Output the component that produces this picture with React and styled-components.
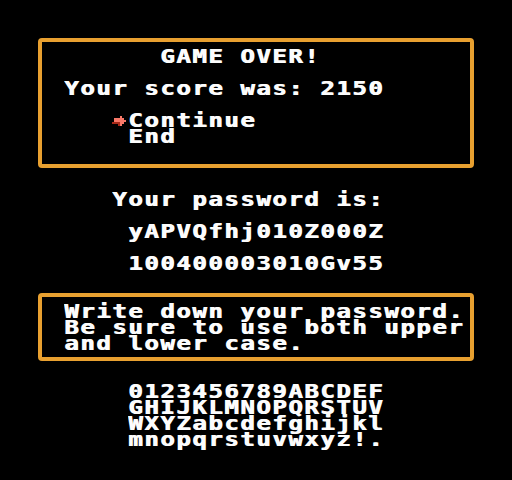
import React from "react";
import styled, { createGlobalStyle } from "styled-components";

const CELL = 16;

const GlobalStyle = createGlobalStyle`
  html, body {
    margin: 0;
    padding: 0;
    background: #000;
  }
`;

const Screen = styled.div`
  width: 512px;
  height: 480px;
  background: #000;
  color: #fcfcfc;
  font-family: "DejaVu Sans Mono", "Liberation Mono", monospace;
  font-weight: bold;
  font-size: 20px;
  line-height: ${CELL}px;
  padding-top: 38px;
  box-sizing: border-box;
  display: flex;
  flex-direction: column;
`;

const Frame = styled.div`
  margin-left: 38px;
  margin-top: ${(p) => p.top || 0}px;
  width: 436px;
  box-sizing: border-box;
  border: 4px solid #e8a030;
  border-radius: 4px;
  padding: ${(p) => p.padTop}px 0 ${(p) => p.padBottom}px 22px;
  display: flex;
  flex-direction: column;
`;

const Block = styled.div`
  margin-top: ${(p) => p.top}px;
  padding-left: ${(p) => p.left}px;
  display: flex;
  flex-direction: column;
`;

const Line = styled.div`
  height: ${CELL}px;
  margin-top: ${(p) => (p.gap ? p.gap * CELL : 0)}px;
  padding-left: ${(p) => (p.indent || 0) * CELL}px;
  display: flex;
  align-items: flex-start;
`;

// chunky, wide glyphs on a 16px grid: 12px advance + spacing, stretched 1.2x
const Text = styled.span`
  display: inline-block;
  white-space: pre;
  letter-spacing: 1.29px;
  transform: scaleX(1.2);
  transform-origin: 0 0;
  text-shadow: 0.8px 0 0 #fcfcfc;
`;

const Cursor = styled.svg`
  width: ${CELL}px;
  height: ${CELL}px;
  flex: none;
  shape-rendering: crispEdges;
`;

function Arrow() {
  return (
    <Cursor viewBox="0 0 8 8">
      <g fill="#a82818">
        <rect x="0" y="5" width="4" height="1" />
        <rect x="3" y="6" width="1" height="1" />
      </g>
      <g fill="#f87868">
        <rect x="1" y="3" width="4" height="2" />
        <rect x="4" y="2" width="1" height="5" />
        <rect x="5" y="3" width="1" height="3" />
        <rect x="6" y="4" width="1" height="1" />
      </g>
    </Cursor>
  );
}

function Row({ children, ...rest }) {
  return (
    <Line {...rest}>
      <Text>{children}</Text>
    </Line>
  );
}

export default function App() {
  return (
    <>
      <GlobalStyle />
      <Screen>
        <Frame padTop={6} padBottom={20}>
          <Row indent={6}>GAME OVER!</Row>
          <Row gap={1}>Your score was: 2150</Row>
          <Line gap={1} indent={3}>
            <Arrow />
            <Text>Continue</Text>
          </Line>
          <Row indent={4}>End</Row>
        </Frame>

        <Block top={23} left={112}>
          <Row>Your password is:</Row>
          <Row gap={1} indent={1}>yAPVQfhj010Z000Z</Row>
          <Row gap={1} indent={1}>100400003010Gv55</Row>
        </Block>

        <Frame top={22} padTop={6} padBottom={6}>
          <Row>Write down your password.</Row>
          <Row>Be sure to use both upper</Row>
          <Row>and lower case.</Row>
        </Frame>

        <Block top={22} left={128}>
          <Row>0123456789ABCDEF</Row>
          <Row>GHIJKLMNOPQRSTUV</Row>
          <Row>WXYZabcdefghijkl</Row>
          <Row>mnopqrstuvwxyz!.</Row>
        </Block>
      </Screen>
    </>
  );
}
